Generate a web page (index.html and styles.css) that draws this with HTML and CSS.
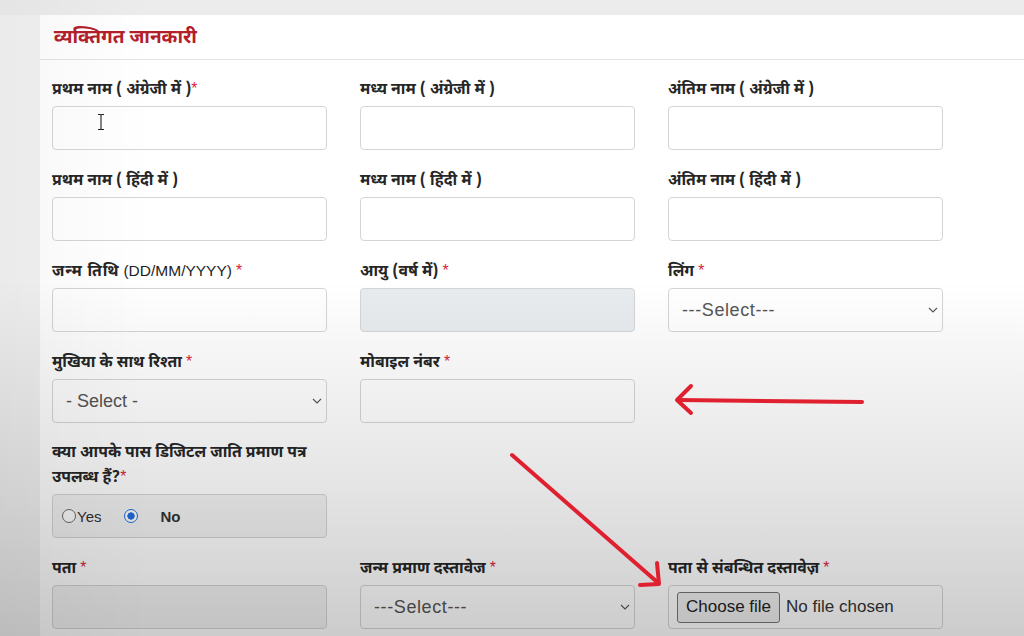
FILE: index.html
```html
<!DOCTYPE html>
<html lang="hi">
<head>
<meta charset="utf-8">
<title>व्यक्तिगत जानकारी</title>
<link rel="stylesheet" href="styles.css">
</head>
<body>
<div class="page">
  <div class="card">
    <div class="card-header"><h2 class="title">व्यक्तिगत जानकारी</h2></div>
    <div class="card-body">
      <div class="grid">
        <div class="group">
          <label class="lbl">प्रथम नाम ( अंग्रेजी में )<span class="req">*</span></label>
          <div class="cursor-wrap">
            <input class="ctrl" type="text">
            <svg class="ibeam" width="8" height="18" viewBox="0 0 8 18"><path d="M1 1.5h2.2q0.8 0 0.8 1v13q0 1-0.8 1H1M7 1.5H4.8q-0.8 0-0.8 1v13q0 1 0.8 1H7" fill="none" stroke="#222" stroke-width="1.1"/></svg>
          </div>
        </div>
        <div class="group">
          <label class="lbl">मध्य नाम ( अंग्रेजी में )</label>
          <input class="ctrl" type="text">
        </div>
        <div class="group">
          <label class="lbl">अंतिम नाम ( अंग्रेजी में )</label>
          <input class="ctrl" type="text">
        </div>

        <div class="group">
          <label class="lbl">प्रथम नाम ( हिंदी में )</label>
          <input class="ctrl" type="text">
        </div>
        <div class="group">
          <label class="lbl">मध्य नाम ( हिंदी में )</label>
          <input class="ctrl" type="text">
        </div>
        <div class="group">
          <label class="lbl">अंतिम नाम ( हिंदी में )</label>
          <input class="ctrl" type="text">
        </div>

        <div class="group">
          <label class="lbl"><span class="wide">जन्म तिथि</span> <span class="lat">(DD/MM/YYYY)</span> <span class="req">*</span></label>
          <input class="ctrl" type="text">
        </div>
        <div class="group">
          <label class="lbl">आयु (वर्ष में) <span class="req">*</span></label>
          <input class="ctrl ro" type="text" readonly>
        </div>
        <div class="group">
          <label class="lbl">लिंग <span class="req">*</span></label>
          <div class="ctrl sel"><span class="sel-text dash">---Select---</span><svg class="chev" width="10" height="6" viewBox="0 0 10 6"><path d="M1 1l4 4 4-4" fill="none" stroke="#555" stroke-width="1.1"/></svg></div>
        </div>

        <div class="group">
          <label class="lbl">मुखिया के साथ रिश्ता <span class="req">*</span></label>
          <div class="ctrl sel"><span class="sel-text">- Select -</span><svg class="chev" width="10" height="6" viewBox="0 0 10 6"><path d="M1 1l4 4 4-4" fill="none" stroke="#555" stroke-width="1.1"/></svg></div>
        </div>
        <div class="group">
          <label class="lbl">मोबाइल नंबर <span class="req">*</span></label>
          <input class="ctrl" type="text">
        </div>
        <div class="group"></div>

        <div class="group">
          <label class="lbl two">क्या आपके पास डिजिटल जाति प्रमाण पत्र<br>उपलब्ध हैं?<span class="req">*</span></label>
          <div class="ctrl soft radios">
            <span class="radio"></span><span class="rtext yes">Yes</span>
            <span class="radio on"></span><span class="rtext no">No</span>
          </div>
        </div>
        <div class="group"></div>
        <div class="group"></div>

        <div class="group">
          <label class="lbl">पता <span class="req">*</span></label>
          <input class="ctrl soft" type="text" readonly>
        </div>
        <div class="group">
          <label class="lbl">जन्म प्रमाण दस्तावेज <span class="req">*</span></label>
          <div class="ctrl sel"><span class="sel-text dash">---Select---</span><svg class="chev" width="10" height="6" viewBox="0 0 10 6"><path d="M1 1l4 4 4-4" fill="none" stroke="#555" stroke-width="1.1"/></svg></div>
        </div>
        <div class="group">
          <label class="lbl">पता से संबन्धित दस्तावेज़ <span class="req">*</span></label>
          <div class="ctrl file"><span class="file-btn">Choose file</span><span class="file-text">No file chosen</span></div>
        </div>
      </div>
    </div>
  </div>
</div>
<div class="shade"></div>
<svg class="arrows" width="1024" height="636" viewBox="0 0 1024 636">
  <g fill="none" stroke="#e0202f" stroke-width="4" stroke-linecap="round" stroke-linejoin="round">
    <path d="M862 402L678 400"/>
    <path d="M691 386L677 400L691 413"/>
    <path d="M512 455L656 581"/>
    <path d="M657 563L659 584L640 585"/>
  </g>
</svg>
</body>
</html>
```

FILE: styles.css
```css
html, body {
  margin: 0;
  padding: 0;
}
body {
  width: 1024px;
  height: 636px;
  overflow: hidden;
  background: #f2f2f2;
  font-family: "Noto Sans Devanagari", "Noto Sans", "Liberation Sans", sans-serif;
  position: relative;
}
.page {
  padding: 15px 0 0 40px;
  background: linear-gradient(#ececec, #ececec) top / 100% 15px no-repeat;
}
.card {
  background: #fff;
  height: 621px;
}
.card-header {
  box-sizing: border-box;
  height: 45px;
  border-bottom: 1px solid #e2e2e2;
  display: flex;
  align-items: center;
  padding: 4px 0 0 14px;
}
.title {
  margin: 0;
  font-size: 19px;
  font-weight: 700;
  color: #b3202b;
  line-height: 24px;
}
.card-body {
  padding: 17px 0 0 12px;
}
.grid {
  display: grid;
  grid-template-columns: 275px 275px 275px;
  column-gap: 33px;
  row-gap: 18px;
}
.group {
  display: flex;
  flex-direction: column;
}
.lbl {
  display: block;
  height: 24px;
  font-size: 15.8px;
  font-weight: 700;
  color: #262626;
  line-height: 27px;
  margin-bottom: 5px;
  white-space: nowrap;
  overflow: visible;
}
.lbl.two {
  height: 48px;
  line-height: 25px;
}
.wide {
  letter-spacing: 0.8px;
}
.lat {
  font-family: "Liberation Sans", sans-serif;
  font-weight: 400;
  font-size: 15.5px;
  color: #1e1e1e;
  line-height: 1;
}
.req {
  color: #d9233a;
  font-family: "Liberation Sans", sans-serif;
  font-weight: 400;
  line-height: 1;
}
.ctrl {
  box-sizing: border-box;
  width: 275px;
  height: 44px;
  border: 1px solid #d3d6d9;
  border-radius: 4px;
  background: #fff;
  font-family: "Liberation Sans", sans-serif;
  font-size: 16px;
  color: #555;
  margin: 0;
  padding: 0 13px;
  outline: none;
}
.ro {
  background: #e9ecef;
}
.soft {
  background: #f3f3f3;
}
.cursor-wrap {
  position: relative;
}
.ibeam {
  position: absolute;
  left: 45px;
  top: 7px;
}
.sel {
  display: flex;
  align-items: center;
  justify-content: space-between;
  padding: 0 4px 0 13px;
}
.sel-text {
  color: #555;
  font-size: 18px;
}
.sel-text.dash {
  letter-spacing: 0.6px;
}
.chev {
  display: block;
}
.radios {
  display: flex;
  align-items: center;
  padding: 0 0 0 9px;
  font-size: 15px;
  color: #333;
}
.radio {
  box-sizing: border-box;
  width: 14px;
  height: 14px;
  border-radius: 50%;
  border: 1px solid #6b6b6b;
  background: #fff;
  display: inline-block;
}
.radio.on {
  border: 1.5px solid #1f6fe0;
  background: radial-gradient(circle, #1f6fe0 0 3.4px, #fff 3.9px);
  margin-left: 23px;
}
.rtext.yes {
  font-weight: 400;
  color: #333;
  margin-left: 1px;
  font-size: 15px;
}
.rtext.no {
  margin-left: 22px;
  font-weight: 700;
  color: #333;
}
.file {
  display: flex;
  align-items: center;
  padding: 0 8px;
  gap: 6px;
}
.file-btn {
  box-sizing: border-box;
  height: 31px;
  padding: 0 8px;
  display: flex;
  align-items: center;
  border: 1px solid #767676;
  border-radius: 3px;
  background: #efefef;
  color: #222;
  font-size: 17px;
}
.file-text {
  color: #333;
  font-size: 17px;
}
.shade {
  position: absolute;
  left: 0;
  top: 0;
  width: 1024px;
  height: 636px;
  pointer-events: none;
  background:
    linear-gradient(to right, rgba(0,0,0,0.03), rgba(0,0,0,0) 15%),
    linear-gradient(to bottom, rgba(0,0,0,0) 44%, rgba(0,0,0,0.05) 60%, rgba(0,0,0,0.11) 78%, rgba(0,0,0,0.2) 100%);
}
.arrows {
  position: absolute;
  left: 0;
  top: 0;
  pointer-events: none;
}
```
